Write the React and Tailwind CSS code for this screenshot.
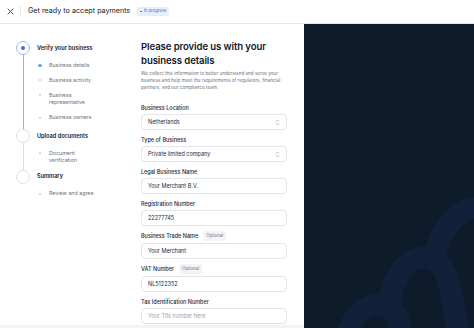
import React from 'react';

const Step = ({ title, state, items, last, lineBlue, pad }) => {
    return (
        <div className="flex">
            <div className="w-[14px] flex flex-col items-center">
                <div className={`w-[14px] h-[14px] rounded-full border flex items-center justify-center bg-white ${state === 'active' ? 'border-[#9db8ea]' : 'border-[#dcdfe4]'}`}>
                    {state === 'active' && <div className="w-[4px] h-[4px] rounded-full bg-[#3c6fd8]" />}
                </div>
                {!last && <div className={`w-px flex-1 ${lineBlue ? 'bg-[#8fb0ea]' : 'bg-[#dcdfe4]'}`} />}
            </div>
            <div className={`ml-[7px] flex-1 ${pad}`}>
                <div className="h-[14px] flex items-center text-[5.6px] font-semibold text-[#111827]">{title}</div>
                <div className="mt-[6.5px] flex flex-col gap-[7.5px]">
                    {items.map((it, i) => (
                        <div key={i} className="flex items-start">
                            <div className="w-[8px] h-[7.5px] flex items-center justify-center ml-[-1px]">
                                <div className={`rounded-full ${it.active ? 'w-[3.5px] h-[3.5px] bg-[#7ea2e6]' : 'w-[2px] h-[2px] bg-[#c9cdd3]'}`} />
                            </div>
                            <div className="ml-[5px] text-[5.3px] leading-[7.5px] text-[#6b7280] w-[52px]">{it.label}</div>
                        </div>
                    ))}
                </div>
            </div>
        </div>
    );
};

const Field = ({ label, value, placeholder, optional, select }) => {
    return (
        <div className="mb-[6px]">
            <div className={`flex items-center gap-[5px] mb-[2px] ${optional ? 'h-[10px] -mt-[1px]' : 'h-[8px]'}`}>
                <span className="text-[5.5px] font-medium text-[#1f2937]">{label}</span>
                {optional && (
                    <span className="text-[4.3px] text-[#6b7280] bg-[#f3f4f6] rounded-[2px] px-[3px] py-[1.5px]">Optional</span>
                )}
            </div>
            <div className="h-[16px] rounded-[4px] border border-[#e2e5ea] bg-white flex items-center px-[6px] justify-between">
                <span className={`text-[5.5px] ${value ? 'text-[#1f2937]' : 'text-[#9ca3af]'}`}>{value || placeholder}</span>
                {select && (
                    <svg width="5" height="7" viewBox="0 0 5 7" fill="none" stroke="#9ca3af" strokeWidth="0.7" strokeLinecap="round" strokeLinejoin="round">
                        <path d="M1 2.5 L2.5 1 L4 2.5" />
                        <path d="M1 4.5 L2.5 6 L4 4.5" />
                    </svg>
                )}
            </div>
        </div>
    );
};

export default function App() {
    return (
        <div className="w-[474px] h-[328px] flex flex-col overflow-hidden bg-white font-['Inter',sans-serif]">
            <header className="h-[24px] bg-white border-b border-[#e5e7eb] flex items-center shrink-0">
                <div className="w-[20px] flex items-center justify-center">
                    <svg width="7" height="7" viewBox="0 0 7 7" stroke="#374151" strokeWidth="0.9" strokeLinecap="round">
                        <path d="M1 1 L6 6 M6 1 L1 6" />
                    </svg>
                </div>
                <div className="w-px h-[11px] bg-[#e5e7eb]" />
                <div className="ml-[7px] text-[7.2px] text-[#111827]">Get ready to accept payments</div>
                <div className="ml-[7px] h-[9px] px-[3px] rounded-[2px] bg-[#e6eefc] text-[#3c6fd8] text-[4.2px] flex items-center gap-[2px]">
                    <span className="w-[1.5px] h-[1.5px] rounded-full bg-[#3c6fd8]" />
                    In progress
                </div>
            </header>
            <div className="flex flex-1 min-h-0">
                <div className="w-[304px] flex flex-col">
                    <div className="flex flex-1 min-h-0 overflow-hidden">
                        <aside className="w-[141px] pl-[16px] pt-[17px]">
                            <Step
                                title="Verify your business"
                                state="active"
                                lineBlue
                                pad="pb-[7.5px]"
                                items={[
                                    { label: 'Business details', active: true },
                                    { label: 'Business activity' },
                                    { label: 'Business representative' },
                                    { label: 'Business owners' },
                                ]}
                            />
                            <Step
                                title="Upload documents"
                                pad="pb-[5px]"
                                items={[{ label: 'Document verification' }]}
                            />
                            <Step title="Summary" last items={[{ label: 'Review and agree' }]} />
                        </aside>
                        <main className="flex-1 pr-[17px] pt-[16px]">
                            <h1 className="text-[9.6px] leading-[14px] font-semibold text-[#111827] tracking-[-0.1px]">
                                Please provide us with your business details
                            </h1>
                            <p className="mt-[2px] text-[4.6px] leading-[7px] text-[#6b7280]">
                                We collect this information to better understand and serve your business and help meet the requirements of regulators, financial partners, and our compliance team.
                            </p>
                            <div className="mt-[13px]">
                                <Field label="Business Location" value="Netherlands" select />
                                <Field label="Type of Business" value="Private limited company" select />
                                <Field label="Legal Business Name" value="Your Merchant B.V." />
                                <Field label="Registration Number" value="22277745" />
                                <Field label="Business Trade Name" value="Your Merchant" optional />
                                <Field label="VAT Number" value="NL5122352" optional />
                                <Field label="Tax Identification Number" placeholder="Your TIN number here" />
                            </div>
                        </main>
                    </div>
                    <div className="h-[3px] bg-[#f3f4f6] shrink-0" />
                </div>
                <div className="flex-1 bg-[#0e1b2b] relative overflow-hidden">
                    <svg className="absolute inset-0" width="170" height="304" viewBox="304 24 170 304" fill="none">
                        <g stroke="#11213a" strokeWidth="22" strokeLinecap="round">
                            <path d="M345 350 C348 312 372 298 390 308 C402 316 402 336 400 350" />
                            <path d="M390 308 C390 272 414 250 434 260 C450 268 452 300 458 330" />
                            <path d="M434 260 C440 225 462 205 482 208" />
                        </g>
                        <g stroke="#0e1c30" strokeWidth="3" strokeLinecap="round">
                            <path d="M358 345 C360 322 372 314 382 318" />
                            <path d="M402 305 C404 282 418 270 428 273" />
                        </g>
                    </svg>
                </div>
            </div>
        </div>
    );
}
